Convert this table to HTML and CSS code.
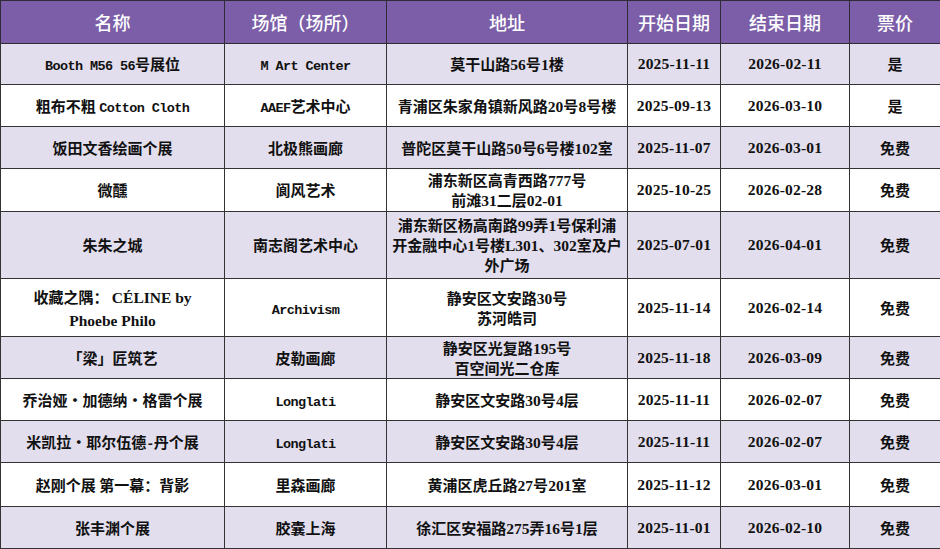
FILE: index.html
```html
<!DOCTYPE html>
<html lang="zh-CN">
<head>
<meta charset="utf-8">
<title>展览列表</title>
<link rel="stylesheet" href="styles.css">
</head>
<body>
<table class="grid">
  <colgroup>
    <col class="c-name">
    <col class="c-venue">
    <col class="c-addr">
    <col class="c-start">
    <col class="c-end">
    <col class="c-price">
  </colgroup>
  <thead>
    <tr>
      <th>名称</th>
      <th>场馆（场所）</th>
      <th>地址</th>
      <th>开始日期</th>
      <th>结束日期</th>
      <th>票价</th>
    </tr>
  </thead>
  <tbody>
    <tr class="alt h41">
      <td><span class="m">Booth M56 56</span>号展位</td>
      <td><span class="m">M Art Center</span></td>
      <td>莫干山路<span class="d">56</span>号<span class="d">1</span>楼</td>
      <td class="d">2025-11-11</td>
      <td class="d">2026-02-11</td>
      <td>是</td>
    </tr>
    <tr class="h42">
      <td>粗布不粗 <span class="m">Cotton Cloth</span></td>
      <td><span class="m">AAEF</span>艺术中心</td>
      <td>青浦区朱家角镇新风路<span class="d">20</span>号<span class="d">8</span>号楼</td>
      <td class="d">2025-09-13</td>
      <td class="d">2026-03-10</td>
      <td>是</td>
    </tr>
    <tr class="alt h42">
      <td>饭田文香绘画个展</td>
      <td>北极熊画廊</td>
      <td>普陀区莫干山路<span class="d">50</span>号<span class="d">6</span>号楼<span class="d">102</span>室</td>
      <td class="d">2025-11-07</td>
      <td class="d">2026-03-01</td>
      <td>免费</td>
    </tr>
    <tr class="h43">
      <td>微醺</td>
      <td>阆风艺术</td>
      <td>浦东新区高青西路<span class="d">777</span>号<br>前滩<span class="d">31</span>二层<span class="d">02-01</span></td>
      <td class="d">2025-10-25</td>
      <td class="d">2026-02-28</td>
      <td>免费</td>
    </tr>
    <tr class="alt h67">
      <td>朱朱之城</td>
      <td>南志阁艺术中心</td>
      <td>浦东新区杨高南路<span class="d">99</span>弄<span class="d">1</span>号保利浦<br>开金融中心<span class="d">1</span>号楼<span class="d">L301</span>、<span class="d">302</span>室及户<br>外广场</td>
      <td class="d">2025-07-01</td>
      <td class="d">2026-04-01</td>
      <td>免费</td>
    </tr>
    <tr class="h58">
      <td class="big">收藏之隅： <span class="s">CÉLINE by</span><br><span class="s">Phoebe Philo</span></td>
      <td><span class="m">Archivism</span></td>
      <td>静安区文安路<span class="d">30</span>号<br>苏河皓司</td>
      <td class="d">2025-11-14</td>
      <td class="d">2026-02-14</td>
      <td>免费</td>
    </tr>
    <tr class="alt h42">
      <td>「梁」匠筑艺</td>
      <td>皮勒画廊</td>
      <td>静安区光复路<span class="d">195</span>号<br>百空间光二仓库</td>
      <td class="d">2025-11-18</td>
      <td class="d">2026-03-09</td>
      <td>免费</td>
    </tr>
    <tr class="h42">
      <td>乔治娅・加德纳・格雷个展</td>
      <td><span class="m">Longlati</span></td>
      <td>静安区文安路<span class="d">30</span>号<span class="d">4</span>层</td>
      <td class="d">2025-11-11</td>
      <td class="d">2026-02-07</td>
      <td>免费</td>
    </tr>
    <tr class="alt h42">
      <td>米凯拉・耶尔伍德<span class="m">-</span>丹个展</td>
      <td><span class="m">Longlati</span></td>
      <td>静安区文安路<span class="d">30</span>号<span class="d">4</span>层</td>
      <td class="d">2025-11-11</td>
      <td class="d">2026-02-07</td>
      <td>免费</td>
    </tr>
    <tr class="h44">
      <td>赵刚个展 第一幕：背影</td>
      <td>里森画廊</td>
      <td>黄浦区虎丘路<span class="d">27</span>号<span class="d">201</span>室</td>
      <td class="d">2025-11-12</td>
      <td class="d">2026-03-01</td>
      <td>免费</td>
    </tr>
    <tr class="alt h42">
      <td>张丰渊个展</td>
      <td>胶囊上海</td>
      <td>徐汇区安福路<span class="d">275</span>弄<span class="d">16</span>号<span class="d">1</span>层</td>
      <td class="d">2025-11-01</td>
      <td class="d">2026-02-10</td>
      <td>免费</td>
    </tr>
  </tbody>
</table>
</body>
</html>
```
FILE: styles.css
```css
html, body {
  margin: 0;
  padding: 0;
  background: #ffffff;
}

.grid {
  border-collapse: collapse;
  table-layout: fixed;
  width: 940px;
}

.c-name { width: 224px; }
.c-venue { width: 162px; }
.c-addr { width: 241px; }
.c-start { width: 93px; }
.c-end { width: 129px; }
.c-price { width: 91px; }

.grid th {
  background: #7b5ea7;
  color: #ffffff;
  font-family: "Noto Sans CJK SC", sans-serif;
  font-weight: 500;
  font-size: 18px;
  line-height: 24px;
  height: 42px;
  padding: 0;
  border: 1px solid #2e2a36;
  text-align: center;
  vertical-align: middle;
}

.grid td {
  border: 1px solid #333333;
  padding: 0 4px;
  text-align: center;
  vertical-align: middle;
  white-space: nowrap;
  color: #111111;
  font-family: "Noto Sans CJK SC", sans-serif;
  font-weight: 600;
  font-size: 15px;
  line-height: 20px;
  background: #ffffff;
}

.grid tr.alt td {
  background: #e2deed;
}

.grid tr.h41 td { height: 40px; }
.grid tr.h42 td { height: 41px; }
.grid tr.h43 td { height: 42px; }
.grid tr.h44 td { height: 43px; }
.grid tr.h58 td { height: 57px; }
.grid tr.h67 td { height: 66px; }

.m {
  font-family: "Liberation Mono", monospace;
  font-weight: 700;
  font-size: 13.5px;
  line-height: 1;
  letter-spacing: -0.6px;
}

.d {
  font-family: "Liberation Serif", serif;
  font-weight: 700;
  font-size: 15.5px;
  line-height: 1;
}

.grid td.d {
  font-family: "Liberation Serif", serif;
  font-weight: 700;
  font-size: 15.5px;
  line-height: 20px;
  letter-spacing: 0.2px;
}

.grid td.big {
  line-height: 23px;
}

.s {
  font-family: "Liberation Serif", serif;
  font-weight: 700;
  font-size: 15.5px;
  line-height: 1;
}
```
